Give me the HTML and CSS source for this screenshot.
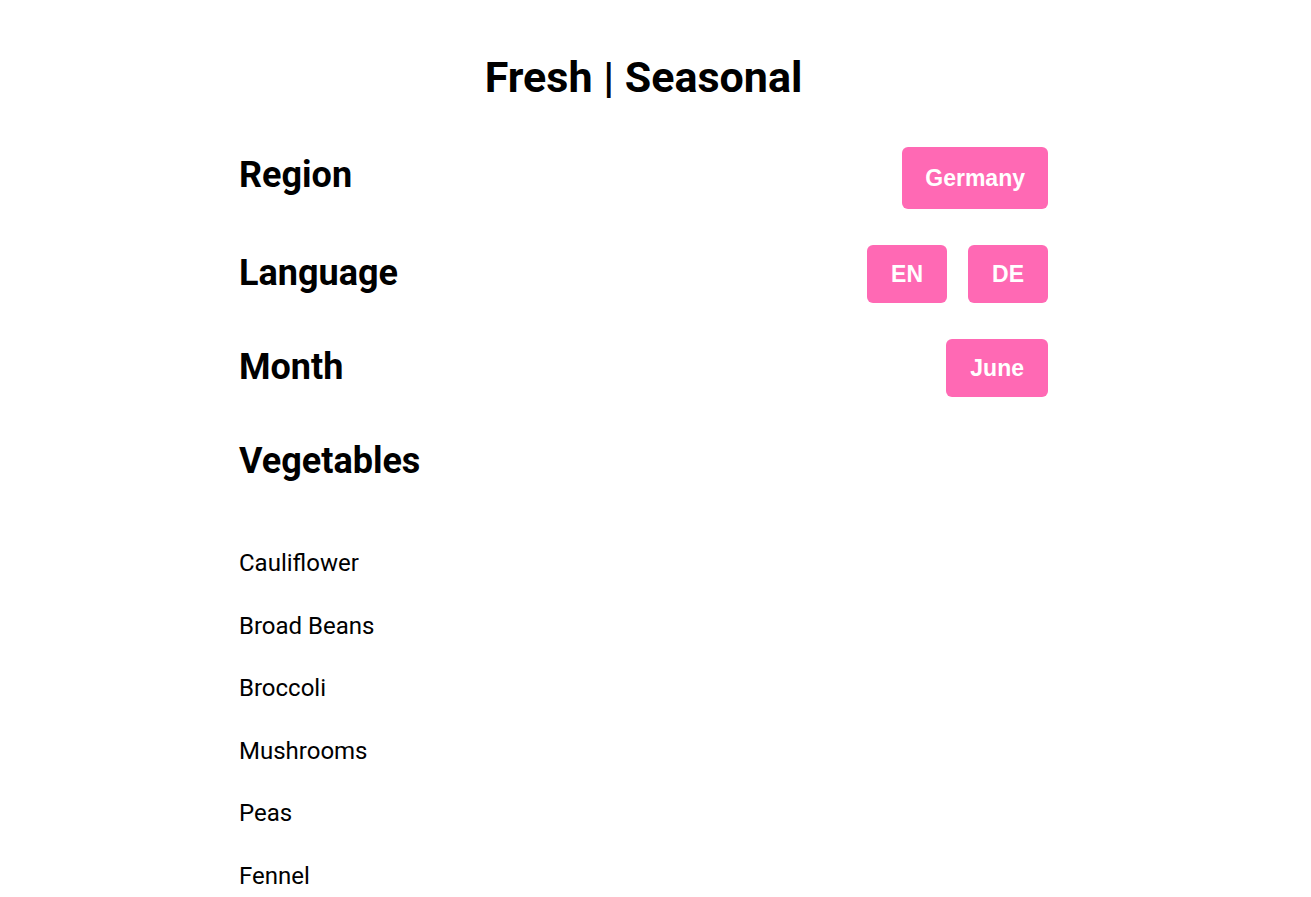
FILE: index.html
```html
<!DOCTYPE html>
<html lang="en">
<head>
<meta charset="utf-8">
<title>Fresh | Seasonal</title>
<link rel="stylesheet" href="styles.css">
</head>
<body>
<div class="page">
  <h1 class="title">Fresh | Seasonal</h1>
  <main class="panel">
    <section class="row">
      <h2 class="label">Region</h2>
      <div class="controls">
        <button class="btn btn-tall">Germany</button>
      </div>
    </section>
    <section class="row">
      <h2 class="label">Language</h2>
      <div class="controls">
        <button class="btn">EN</button>
        <button class="btn">DE</button>
      </div>
    </section>
    <section class="row">
      <h2 class="label">Month</h2>
      <div class="controls">
        <button class="btn">June</button>
      </div>
    </section>
    <section class="row">
      <h2 class="label">Vegetables</h2>
    </section>
    <ul class="list">
      <li>Cauliflower</li>
      <li>Broad Beans</li>
      <li>Broccoli</li>
      <li>Mushrooms</li>
      <li>Peas</li>
      <li>Fennel</li>
    </ul>
  </main>
</div>
</body>
</html>
```

FILE: styles.css
```css
* { box-sizing: border-box; }
html, body { margin: 0; padding: 0; background: #fff; }
body {
  font-family: Roboto, "Noto Sans", sans-serif;
  color: #000;
}
.page {
  padding: 0 24px 0 0;
}
.title {
  margin: 0;
  padding-top: 51px;
  text-align: center;
  font-size: 43px;
  font-weight: 700;
  line-height: 52px;
}
.panel {
  width: 809px;
  margin: 0 auto;
  padding-top: 39px;
}
.row {
  display: flex;
  align-items: center;
  justify-content: space-between;
}
.label {
  margin: 0;
  font-size: 36px;
  font-weight: 700;
  line-height: 42px;
}
.row:nth-child(1) { height: 66px; }
.row:nth-child(2) { height: 58px; margin-top: 36px; }
.row:nth-child(3) { height: 58px; margin-top: 36px; }
.row:nth-child(4) { height: 58px; margin-top: 36px; }
.controls {
  display: flex;
  gap: 21px;
  margin-top: 2px;
}
.btn {
  font-family: "Liberation Sans", Arial, sans-serif;
  font-weight: 700;
  font-size: 23px;
  color: #fff;
  background: #ff69b4;
  border: none;
  border-radius: 6px;
  height: 58px;
  padding: 0 24px;
  cursor: pointer;
}
.btn-tall { height: 62px; margin-top: 4px; padding: 0 23px; }
.list {
  list-style: none;
  margin: 0;
  padding: 60px 0 0 0;
}
.list li {
  font-size: 24px;
  line-height: 26px;
  margin-bottom: 36.5px;
}
```
